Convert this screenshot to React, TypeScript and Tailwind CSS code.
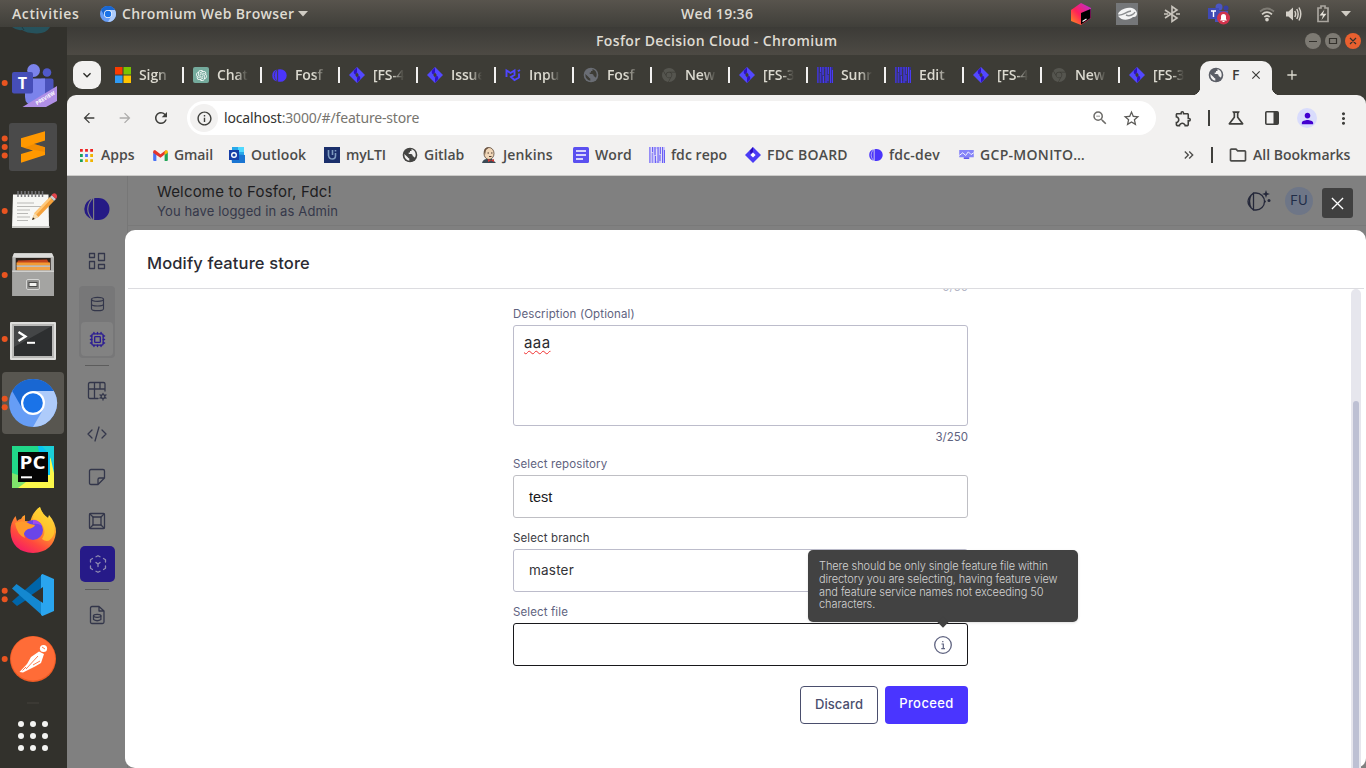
import React from "react";
import {
  MdArrowBack, MdArrowForward, MdRefresh, MdInfoOutline, MdZoomOut, MdStarBorder,
  MdMoreVert, MdPerson, MdOutlineFolder, MdClose,
  MdAdd, MdKeyboardDoubleArrowRight, MdKeyboardArrowDown, MdOutlineScience, MdOutlineExtension,
} from "react-icons/md";
import { RiOpenaiFill } from "react-icons/ri";
import { SiGooglechrome } from "react-icons/si";
import { Database, Cpu } from "lucide-react";

const ui = "font-['Open_Sans','Noto_Sans',sans-serif]";

/* ---------- small brand marks ---------- */

function ChromiumMark({ className }: { className: string }) {
  return (
    <svg viewBox="0 0 48 48" className={className}>
      <circle cx="24" cy="24" r="24" fill="#669df6" />
      <path d="M3.2 12A24 24 0 0 1 44.8 12L24 12L13.6 30Z" fill="#1967d2" />
      <path d="M44.8 12A24 24 0 0 1 24 48L34.4 30L36 24L24 12Z" fill="#aecbfa" />
      <circle cx="24" cy="24" r="12" fill="#fff" />
      <circle cx="24" cy="24" r="9.8" fill="#1a73e8" />
    </svg>
  );
}

function Jira() {
  return (
    <svg viewBox="0 0 16 16" className="size-4">
      <path d="M8 0L16 8L8 16L0 8Z" fill="#5348ff" />
      <path d="M8 .5L5 3.500Q4 6.500 6.500 7.500L8 5.300ZM8 15.500L11 12.500Q12 9.500 9.500 8.500L8 10.700Z" fill="#2f10c8" />
      <path d="M8 5.400L9.800 8L8 10.600L6.200 8Z" fill="#3d3c36" />
    </svg>
  );
}

function JiraLight() {
  return (
    <svg viewBox="0 0 16 16" className="size-4">
      <path d="M8 0L16 8L8 16L0 8Z" fill="#4b3cf5" />
      <path d="M8 0L5 3.500L5.500 7L8 5Z" fill="#2c0cb8" />
      <path d="M8 5.400L10.600 8L8 10.600L5.400 8Z" fill="#fff" />
    </svg>
  );
}

function FosforMark({ className, line }: { className: string; line: string }) {
  return (
    <svg viewBox="0 0 28 22" className={className}>
      <path d="M11 .4A10.800 10.800 0 0 0 11 21.600Z" fill="currentColor" />
      <path d="M11.500 .3A11.800 11 0 0 1 16.500 0A11 11 0 0 1 16.500 22A11.800 11 0 0 1 11.500 21.700Z" fill="currentColor" />
      <path d="M10.500 .4Q1 11 10.500 21.600M11.600 0V22" stroke={line} strokeWidth="1.100" fill="none" />
    </svg>
  );
}

function Stripes({ pale }: { pale?: boolean }) {
  const bg = pale ? "#c9c4fb" : "#332f8e";
  return (
    <svg viewBox="0 0 16 16" className="size-4">
      <rect width="16" height="16" fill={bg} />
      <path d="M1 0V16M3.500 0V5M3 6V16M6 0V8M6.500 9V16M9 0V16M11.500 0V7M11 8V14M13.500 0V16M15.500 3V16" stroke={pale ? "#6a5ff5" : "#4a3bf2"} strokeWidth="1.100" />
      <path d="M2.200 0V16M7.700 2V14M12.400 0V16" stroke={pale ? "#f2f1f0" : "#3d3c36"} strokeWidth=".8" />
    </svg>
  );
}

function Squares() {
  return (
    <svg viewBox="0 0 16 16" className="size-4">
      <path d="M0 0H7.500V7.500H0Z" fill="#fb3b00" /><path d="M8.500 0H16V7.500H8.500Z" fill="#7bc400" />
      <path d="M0 8.500H7.500V16H0Z" fill="#2f9bf5" /><path d="M8.500 8.500H16V16H8.500Z" fill="#ffc400" />
    </svg>
  );
}

function Mui() {
  return (
    <svg viewBox="0 0 16 16" className="size-4" fill="none" stroke="#4f46ff" strokeWidth="1.900">
      <path d="M1.500 10V3.500L5.500 6L9.500 3.500V8L6 10L9.500 13L14 10.500V6.500M12.800 4.300L15 3" />
    </svg>
  );
}

/* ---------- top panel ---------- */

function TopPanel() {
  return (
    <header className={`${ui} flex h-[27px] shrink-0 items-center bg-linear-to-b from-[#58544d] to-[#403f3a] text-[14px] font-semibold text-[#dfdbd2]`}>
      <div className="flex w-[681px] items-center pl-3">
        <span className="w-[68px] whitespace-nowrap pb-px tracking-[0.6px]">Activities</span>
        <ChromiumMark className="ml-5 size-4" />
        <span className="ml-[6px] w-[173px] whitespace-nowrap pb-px tracking-[0.350px]">Chromium Web Browser</span>
        <svg viewBox="0 0 10 6" className="ml-[3px] h-[6px] w-[10px]"><path d="M0 0H10L5 5.500Z" fill="#d0ccc4" /></svg>
      </div>
      <span className="w-[74px] whitespace-nowrap pb-px tracking-[0.3px]">Wed 19:36</span>
      <div className="ml-[315px] flex items-center">
        <svg viewBox="0 0 22 22" className="size-[22px]">
          <defs>
            <linearGradient id="jb" x1="0" x2="1" y1="1" y2="0"><stop offset="0" stopColor="#ff9419" /><stop offset=".45" stopColor="#ff1f5a" /><stop offset="1" stopColor="#b62fe0" /></linearGradient>
          </defs>
          <path d="M11 0L21 5V15L11 22L1 18V7Z" fill="url(#jb)" />
          <path d="M11 10L20.500 6V15L11 21.500Z" fill="#000" /><path d="M12.500 18.500L16.500 16" stroke="#fff" strokeWidth="1.200" />
        </svg>
        <svg viewBox="0 0 22 22" className="ml-[24px] size-[22px]">
          <rect width="22" height="22" fill="#757779" />
          <path d="M3 14C-1 10 8 3 16 5C23 7 22 15 17 14C12 18 5 17 3 14Z" fill="#f4f4f4" />
          <path d="M2 12C7 13 9 9 15 8M10 12C14 14 18 11 19 9" stroke="#8b8d8f" strokeWidth="1.400" fill="none" />
        </svg>
        <svg viewBox="0 0 18 18" className="ml-[25px] size-[18px]" fill="none" stroke="#c9c5bd" strokeWidth="1.600"><path d="M2 5L14 13L9 16.500V1.500L14 5L2 13M1 9H5M13 9H17" /></svg>
        <svg viewBox="0 0 24 22" className="ml-[26px] h-[22px] w-6">
          <circle cx="12" cy="4" r="3.500" fill="#4a56c4" /><circle cx="19" cy="5" r="2.500" fill="#373fa4" />
          <path d="M8 8H21V19H8Z" fill="#4850b8" /><rect x="1" y="5" width="11" height="11" fill="#3f49b5" />
          <path d="M4 8H9M6.500 8V14" stroke="#fff" strokeWidth="1.400" />
          <circle cx="16.500" cy="15" r="6.500" fill="#d0334c" />
          <path d="M13 17.500L14 16V13.500A2.500 2.500 0 0 1 19 13.500V16L20 17.500ZM15.500 18H17.500V19H15.500Z" fill="#fff" />
        </svg>
        <svg viewBox="0 0 16 16" className="ml-[28px] size-4" fill="none" stroke="#d5d1c9" strokeWidth="1.700">
          <path d="M1 5.500Q8 -.5 15 5.500" opacity=".35" /><path d="M3 8.300Q8 4 13 8.300" /><path d="M5.300 11Q8 8.500 10.700 11" /><circle cx="8" cy="13.600" r="1" fill="#d5d1c9" />
        </svg>
        <svg viewBox="0 0 18 16" className="ml-[10px] h-4 w-[18px]" fill="none" stroke="#d5d1c9" strokeWidth="1.500">
          <path d="M1 5.500H3.500L8 1.500V14.500L3.500 10.500H1Z" fill="#d5d1c9" stroke="none" /><path d="M9.800 5Q11.500 8 9.800 11M11.800 3Q14.500 8 11.800 13M14 1.500Q17.500 8 14 14.500" />
        </svg>
        <svg viewBox="0 0 14 18" className="ml-[13px] h-[18px] w-[14px]">
          <path d="M2 3H5V1H9V3H12V16.500H2Z" fill="none" stroke="#a9a59e" strokeWidth="1.700" /><path d="M8.500 4.500L3.500 10.500H7L5.500 15L10.500 8.800H7Z" fill="#e5e1d9" />
        </svg>
        <svg viewBox="0 0 10 6" className="ml-[11px] h-[6px] w-[10px]"><path d="M0 0H10L5 5.500Z" fill="#d0ccc4" /></svg>
      </div>
    </header>
  );
}

/* ---------- dock ---------- */

function DockItem({ dots = 0, children }: { dots?: number; children: React.ReactNode }) {
  const start = 32 - (dots - 1) * 4.2;
  return (
    <svg viewBox="0 0 67 64" className="block h-16 w-[67px] shrink-0">
      {children}
      {Array.from({ length: dots }, (_, i) => (
        <circle key={i} cx="4.700" cy={start + i * 8.4} r="3" fill="#e95420" />
      ))}
    </svg>
  );
}

function Dock() {
  return (
    <aside className="flex w-[67px] shrink-0 flex-col bg-[#32312c]">
      <svg viewBox="0 0 67 24" className="block h-6 w-[67px] shrink-0">
        <path d="M12 0H50Q46 7 36 6.500Q26 6 22 3Q17 4 12 0Z" fill="#26525c" /><path d="M22 0L24 3" stroke="#1d3b40" />
      </svg>
      <DockItem dots={1}>
        <circle cx="47" cy="21.500" r="4.300" fill="#5059c9" /><rect x="40" y="27.500" width="13.500" height="20" rx="2" fill="#4b53bc" />
        <circle cx="33.600" cy="19.500" r="6.400" fill="#7b83eb" /><path d="M25 27.500H45V46Q43 55 34 55Q25 54 25 46Z" fill="#7b83eb" />
        <rect x="12" y="21" width="21" height="21.500" rx="2" fill="#464eb8" />
        <text x="22.500" y="37.500" textAnchor="middle" fontSize="16" fontWeight="700" fill="#fff" fontFamily="Open Sans">T</text>
        <path d="M22.500 56L57 35V56Z" fill="#b08fe6" />
        <text transform="translate(37 54.200) rotate(-31)" fontSize="5.200" fontWeight="700" fill="#fff" fontFamily="Open Sans" textLength="21.500" lengthAdjust="spacingAndGlyphs">PREVIEW</text>
        <path d="M57 50V56H46Z" fill="#32312c" />
      </DockItem>
      <DockItem dots={3}>
        <rect x="9" y="8" width="48" height="48" rx="3" fill="#4a4a4a" />
        <path d="M21 23.300L45 16.300V25.500L34 29L45 32.300V40L21 47.700V39L33 35.500L21 31.700Z" fill="#ff9800" />
        <path d="M34 29L45 32.300V37L24 33Z" fill="#e98300" opacity=".6" />
      </DockItem>
      <DockItem dots={1}>
        <path d="M13 15.500H48.500L49 48.500H12Z" fill="#f7f7f4" /><path d="M12 47H49.500V49H12Z" fill="#c9c9c5" />
        <path d="M18 12V18M21.500 12V18M25 12V18M28.500 12V18M32 12V18M35.500 12V18M39 12V18M42.500 12V18" stroke="#77777a" strokeWidth="1.500" />
        <path d="M17 24H34M17 27.500H42M17 31H30M17 34.500H28M17 38H30M17 41.500H28" stroke="#b9b9b6" strokeWidth="1" />
        <path d="M32 41L34.500 34L50 18L54 22L38.500 38Z" fill="#f5a13b" /><path d="M34.500 34L50 18L51.500 19.500L36 36Z" fill="#ffc97a" />
        <path d="M32 41L34.500 34L38.500 38Z" fill="#f6ddb0" /><path d="M32 41L33 38.300L34.800 40Z" fill="#222" />
        <path d="M50 18L52 16L56 20L54 22Z" fill="#c9cdd0" /><path d="M51.500 16Q54 13 56.500 15.500Q58 18 55.800 20Z" fill="#e2454c" />
      </DockItem>
      <DockItem dots={1}>
        <path d="M14 10.300H52L54 14V53H12.300V14Z" fill="#b3b3b1" /><path d="M14 10.300H52L53.500 14.300H12.600Z" fill="#dcdcda" />
        <rect x="15.700" y="15" width="35" height="12.500" fill="#2b221c" />
        <path d="M18 17.500L47 16.500L49 20H17Z" fill="#c2441c" /><rect x="16.500" y="19.500" width="33.500" height="3" fill="#f39b35" />
        <rect x="16.500" y="22.500" width="33.500" height="1.200" fill="#fff" /><rect x="16.500" y="24" width="33.500" height="3.500" fill="#f0a248" />
        <path d="M12.300 27.500H54V53H12.300Z" fill="#a4a4a2" /><path d="M12.300 27.500H54V29H12.300Z" fill="#d0d0ce" />
        <rect x="26.500" y="36.500" width="13" height="10" rx="1.500" fill="#8f8f8d" stroke="#d6d6d4" /><rect x="29" y="39.500" width="8" height="4" fill="#f2f2f0" stroke="#4a4a48" />
      </DockItem>
      <DockItem dots={1}>
        <rect x="10" y="15" width="46" height="38" rx="1" fill="#dededc" /><rect x="12" y="17" width="42" height="34" fill="#b9b9b7" />
        <rect x="14" y="19" width="38" height="30" fill="#2d2f30" /><path d="M14 19H52L14 40Z" fill="#444647" />
        <path d="M18.500 25L25.500 29.500L18.500 34" stroke="#fff" strokeWidth="2.300" fill="none" /><path d="M27 35.800H35" stroke="#fff" strokeWidth="2" />
      </DockItem>
      <DockItem>
        <rect x="2" y="1" width="62" height="62" rx="4" fill="#585650" />
        <circle cx="33" cy="32" r="24" fill="#669df6" />
        <path d="M12.200 20A24 24 0 0 1 53.800 20L33 20L22.600 38Z" fill="#1967d2" />
        <path d="M53.800 20A24 24 0 0 1 33 56L43.400 38L45 32L33 20Z" fill="#aecbfa" />
        <circle cx="33" cy="32" r="12" fill="#fff" /><circle cx="33" cy="32" r="9.800" fill="#1a73e8" />
        <circle cx="4.700" cy="27.800" r="3" fill="#e95420" /><circle cx="4.700" cy="36.200" r="3" fill="#e95420" />
      </DockItem>
      <DockItem>
        <rect x="12" y="11" width="42" height="42" fill="#21d789" /><path d="M38 11H54V53H44Z" fill="#07c3f2" />
        <path d="M12 53L20 40H50V20L54 38V53Z" fill="#fcf84a" /><path d="M12 38V53H18L30 44Z" fill="#7fe36b" /><path d="M42 11H54V30L48 18Z" fill="#1ccfd8" />
        <rect x="18" y="17" width="30" height="30" fill="#050505" />
        <text x="19.500" y="33.500" fontSize="18" fontWeight="700" fill="#fff" fontFamily="Open Sans" textLength="26" lengthAdjust="spacingAndGlyphs">PC</text>
        <path d="M21 42.300H32" stroke="#fff" strokeWidth="2" />
      </DockItem>
      <DockItem>
        <defs>
          <linearGradient id="ff" x1=".8" x2=".2" y1="0" y2="1"><stop offset="0" stopColor="#fff44f" /><stop offset=".35" stopColor="#ffa52a" /><stop offset=".7" stopColor="#ff4a3d" /><stop offset="1" stopColor="#f5156c" /></linearGradient>
        </defs>
        <path d="M15.500 17L17 22Q19 20 21 20Q22 17 25 16V22Q28 22 30 23Q33 12 40 8Q42 15 48 19L49 16Q56 24 56 33Q54 53 33 54Q12 53 10.500 33Q10 24 15.500 17Z" fill="url(#ff)" />
        <circle cx="33" cy="31" r="10" fill="#6a45e8" /><path d="M33 21A10 10 0 0 1 42 27Q38 24 33 25Z" fill="#a04cf0" />
        <path d="M15 24Q23 20 30 25L35 26Q34 29 28 30Q22 33 25 39Q17 36 15 24Z" fill="#ff9a2b" /><path d="M40 8Q42 15 48 19Q55 24 54 35Q49 46 42 40Q47 33 42 25Q37 20 33 20Q34 12 40 8Z" fill="#ffcf2e" opacity=".75" />
      </DockItem>
      <DockItem dots={2}>
        <path d="M12 38.500L43 11V26L17 43Z" fill="#0065a9" /><path d="M12 25.500L16.500 21L43 40V53Z" fill="#1488d0" />
        <path d="M42.500 11L54 16V48L42.500 53L41 52V12Z" fill="#2aa5ef" /><path d="M43 24V40L31.500 32Z" fill="#32312c" />
      </DockItem>
      <DockItem dots={1}>
        <circle cx="33" cy="32" r="23" fill="#ef5b25" /><circle cx="33" cy="31.500" r="22" fill="#ff6c37" />
        <circle cx="43.500" cy="21.500" r="3.600" fill="#fff" /><path d="M39 24.500L44 27L41 36L35 39.500L23 45.500L19.500 45L27 37L31 30Z" fill="#fff" />
        <path d="M26 42L38 29M22.500 43.500L26 40M33 38L40 34M42 20L45 22" stroke="#ff6c37" strokeWidth=".9" />
      </DockItem>
      <svg viewBox="0 0 67 77" className="block h-[77px] w-[67px] shrink-0" fill="#f3f3f1">
        <path d="M27 12H39" stroke="#45433d" />
        {[33, 45, 57].map((y) => [21, 33, 45].map((x) => <circle key={`${x}-${y}`} cx={x} cy={y} r="3" />))}
      </svg>
    </aside>
  );
}

/* ---------- browser chrome ---------- */

function Globe({ className }: { className: string }) {
  return (
    <svg viewBox="0 0 16 16" className={className}>
      <circle cx="8" cy="8" r="7.300" fill="currentColor" />
      <path d="M9.500 2Q13.700 3.500 13.700 8Q13.500 9.500 12.800 10.700Q12 9.500 10.800 9.300Q10.800 7.300 9.300 7H6.700V5.500H8V4H9.500Z" className="fill-[var(--gap)]" />
      <path d="M2.300 7L5.800 10.200Q6 11.300 7.300 11.500V13.700Q2.300 12.700 2.300 7Z" className="fill-[var(--gap)]" />
    </svg>
  );
}

const globe = <Globe className="size-4 text-[#6a6d74] [--gap:#3d3c36]" />;
const chromeGrey = <SiGooglechrome className="m-px size-[14px] text-[#55554f]" />;
const fosfor = <FosforMark className="h-[13px] w-4 text-[#4b35fb]" line="#3d3c36" />;

const tabs: { icon: React.ReactNode; label: string }[] = [
  { icon: <Squares />, label: "Sign" },
  { icon: <span className="flex size-4 items-center justify-center rounded-xs bg-[#74aa9c] text-white"><RiOpenaiFill className="size-[13px]" /></span>, label: "Chat" },
  { icon: fosfor, label: "Fosf" },
  { icon: <Jira />, label: "[FS-4" },
  { icon: <Jira />, label: "Issue" },
  { icon: <Mui />, label: "Inpu" },
  { icon: globe, label: "Fosf" },
  { icon: chromeGrey, label: "New" },
  { icon: <Jira />, label: "[FS-3" },
  { icon: <Stripes />, label: "Sunr" },
  { icon: <Stripes />, label: "Edit" },
  { icon: <Jira />, label: "[FS-4" },
  { icon: chromeGrey, label: "New" },
  { icon: <Jira />, label: "[FS-3" },
];

function TabStrip() {
  return (
    <div className={`${ui} flex h-10 shrink-0 items-center bg-[#3d3c36] pl-[6px] text-[14px] font-semibold text-[#dcdad0]`}>
      <div className="mr-[11px] flex size-7 items-center justify-center rounded-[9px] bg-[#f2f1f0] text-[#2b2b28]">
        <MdKeyboardArrowDown className="size-4" />
      </div>
      {tabs.map((t, i) => (
        <div key={i} className="flex w-[78px] shrink-0 items-center pl-[3px]">
          <span className="flex size-4 shrink-0 items-center justify-center">{t.icon}</span>
          <span className="ml-2 w-[31px] whitespace-nowrap pb-[2px] tracking-[-0.1px] mask-r-from-60% mask-r-to-100%">{t.label}</span>
          {i < 13 && <span className="ml-[12px] h-4 w-[2px] bg-[#f2f1f0]" />}
        </div>
      ))}
      <div className="relative -ml-[4px] flex h-[34px] w-[72px] shrink-0 items-center self-end rounded-t-[10px] bg-[#f2f1f0] pb-[7px] pl-2 text-[#3b3b38]">
        <span className="absolute -left-2 bottom-0 size-2 bg-[radial-gradient(circle_at_0_0,#3d3c36_8px,#f2f1f0_8.500px)]" />
        <span className="absolute -right-2 bottom-0 size-2 bg-[radial-gradient(circle_at_100%_0,#3d3c36_8px,#f2f1f0_8.500px)]" />
        <Globe className="size-4 text-[#5b5e66] [--gap:#f2f1f0]" />
        <span className="ml-[8px] w-[13px] pb-px">F</span>
        <MdClose className="ml-[4px] size-[14px]" />
      </div>
      <MdAdd className="ml-[12px] size-[16px]" />
    </div>
  );
}

function Toolbar() {
  return (
    <div className="flex h-[46px] shrink-0 items-center bg-[#f2f1f0] pl-[14px] text-[#3f3f3c]">
      <MdArrowBack className="size-4" />
      <MdArrowForward className="ml-5 size-4 text-[#adacab]" />
      <MdRefresh className="ml-[19px] size-[18px]" />
      <div className="ml-[17px] flex h-[34px] w-[969px] items-center rounded-full bg-white pl-[3px]">
        <span className="flex size-7 items-center justify-center rounded-full bg-[#f2f1f0]"><MdInfoOutline className="size-[17px]" /></span>
        <span className="ml-[6px] w-[860px] whitespace-nowrap pb-px font-['Noto_Sans',sans-serif] text-[14px] tracking-[-0.170px] text-[#77756f]"><span className="text-[#33332f]">localhost</span>:3000/#/feature-store</span>
        <MdZoomOut className="ml-[7px] size-[18px] text-[#6d6c69]" />
        <MdStarBorder className="ml-[13px] size-[19px] text-[#5d5c59]" />
      </div>
      <MdOutlineExtension className="ml-[18px] size-[19px]" />
      <span className="ml-[15px] h-4 w-[2px] bg-[#3f3f3c]" />
      <MdOutlineScience className="ml-[16px] size-[20px]" />
      <svg viewBox="0 0 14 14" className="ml-[19px] size-[14px]"><rect x=".8" y=".8" width="12.400" height="12.400" rx="1" fill="none" stroke="#3f3f3c" strokeWidth="1.600" /><path d="M8.500 1H13V13H8.500Z" fill="#3f3f3c" /></svg>
      <span className="ml-[18px] flex size-5 items-center justify-center rounded-full bg-[#d9dcfc]"><MdPerson className="size-[17px] text-[#4300d0]" /></span>
      <MdMoreVert className="ml-[17px] size-[19px]" />
    </div>
  );
}

const bookmarks: { icon: React.ReactNode; label: string; w: string }[] = [
  {
    label: "Apps", w: "w-[51px] tracking-[0px]",
    icon: <svg viewBox="0 0 14 14" className="-ml-[2px] size-[13px]"><path d="M0 0H3V3H0ZM5.500 0H8.500V3H5.500ZM11 0H14V3H11Z" fill="#e22" /><path d="M0 5.500H3V8.500H0ZM0 11H3V14H0Z" fill="#18a05b" /><path d="M5.500 5.500H8.500V8.500H5.500Z" fill="#4a6cf7" /><path d="M11 5.500H14V8.500H11ZM11 11H14V14H11ZM5.500 11H8.500V14H5.500Z" fill="#f0b400" /></svg>,
  },
  {
    label: "Gmail", w: "w-[55px] tracking-[-0.1px]",
    icon: <svg viewBox="0 0 16 12" className="h-[11px] w-[15px]"><path d="M0 2V11Q0 12 1 12H3.500V4Z" fill="#4a72f5" /><path d="M16 2V11Q16 12 15 12H12.500V4Z" fill="#22a556" /><path d="M0 2Q0 0 2 0L8 4.500L14 0L12.500 5L8 8.500L3.500 5.500L0 3Z" fill="#e5352b" /><path d="M12.500 1.500L14 0Q16 0 16 2V3L12.500 5.500Z" fill="#f9bb05" /></svg>,
  },
  {
    label: "Outlook", w: "w-[73px] tracking-[0.1px]",
    icon: <svg viewBox="0 0 16 16" className="size-4"><path d="M3 0H15V9H3Z" fill="#28a8ea" /><path d="M9 0H15V5H9Z" fill="#50d9ff" /><path d="M2 7L16 8V16H3Z" fill="#1a75d2" /><path d="M0 3H10V13H0Z" fill="#173fa8" /><circle cx="5" cy="8" r="2.300" fill="none" stroke="#fff" strokeWidth="1.400" /></svg>,
  },
  {
    label: "myLTI", w: "w-[56px] tracking-[-0.150px]",
    icon: <svg viewBox="0 0 16 16" className="size-4"><rect width="16" height="16" fill="#1b2f6b" /><path d="M4.500 3V8.500Q5 12 8.500 12Q11.500 12 11.500 8.500V6M8.500 3V8M11.500 3V4.500" fill="none" stroke="#7e9cc0" strokeWidth="1.600" /></svg>,
  },
  { label: "Gitlab", w: "w-[57px] tracking-[0px]", icon: <Globe className="size-4 shrink-0 text-[#454543] [--gap:#f2f1f0]" /> },
  {
    label: "Jenkins", w: "w-[70px] tracking-[0.150px]",
    icon: <svg viewBox="0 0 16 16" className="size-4"><path d="M1 16Q2 12 6 12H11L15 16Z" fill="#3b4a55" /><ellipse cx="8" cy="6.500" rx="5" ry="6" fill="#f0d6b7" stroke="#5a4636" strokeWidth=".8" /><path d="M3 5Q3 0 8 .4L5 3L4 8Z" fill="#6b5341" /><path d="M6.500 6H8M10 6H11.500M8 9.500H10.500" stroke="#3d2d25" strokeWidth=".9" /><path d="M7 12L13 15V12L7 15Z" fill="#d33833" /></svg>,
  },
  {
    label: "Word", w: "w-[54px] tracking-[0.1px]",
    icon: <svg viewBox="0 0 16 16" className="size-4"><rect width="16" height="16" rx="1.500" fill="#5b50f0" /><path d="M3 4H13M3 8H13M3 12H10" stroke="#fff" strokeWidth="1.600" /></svg>,
  },
  { label: "fdc repo", w: "w-[74px] tracking-[0.050px]", icon: <Stripes pale /> },
  { label: "FDC BOARD", w: "w-[100px] tracking-[0.2px]", icon: <JiraLight /> },
  { label: "fdc-dev", w: "w-[69px] tracking-[0.2px]", icon: <FosforMark className="h-3 w-[15px] text-[#4b35fb]" line="#f2f1f0" /> },
  {
    label: "GCP-MONITO…", w: "w-[125px] tracking-[0.3px]",
    icon: <svg viewBox="0 0 16 11" className="h-[10px] w-[15px]"><rect width="16" height="8" fill="#8583f8" /><path d="M0 6L4 3L7 6L10 2L13 5L16 3" fill="none" stroke="#fff" /><path d="M5 8H11V10H5Z" fill="#6058ee" /></svg>,
  },
];

function Bookmarks() {
  return (
    <div className={`${ui} flex h-[35px] shrink-0 items-center border-b border-[#cccbc9] bg-[#f2f1f0] pb-[6px] pl-[12px] text-[14px] font-semibold text-[#4c4c4a]`}>
      {bookmarks.map((b) => (
        <div key={b.label} className="flex shrink-0 items-center">
          <span className="mr-[6px] flex size-4 shrink-0 items-center justify-center">{b.icon}</span>
          <span className={`${b.w} whitespace-nowrap pb-[2px]`}>{b.label}</span>
        </div>
      ))}
      <MdKeyboardDoubleArrowRight className="ml-[76px] size-4 shrink-0" />
      <span className="ml-[14px] h-4 w-[2px] shrink-0 bg-[#3f3f3c]" />
      <MdOutlineFolder className="ml-[15px] size-[20px] shrink-0" />
      <span className="ml-[5px] whitespace-nowrap pb-[2px] tracking-[0px]">All Bookmarks</span>
    </div>
  );
}

/* ---------- application ---------- */

function SideIcon({ children }: { children: React.ReactNode }) {
  return (
    <svg viewBox="0 0 20 20" className="size-5" fill="none" stroke="currentColor" strokeWidth="1.300" strokeLinejoin="round" strokeLinecap="round">{children}</svg>
  );
}

function Sidebar() {
  return (
    <nav className="flex w-[61px] shrink-0 flex-col items-center border-r border-[#777777] text-[#33364a]">
      <div className="flex h-[66px] items-center pr-[2px]"><FosforMark className="h-[22px] w-7 text-[#251a85]" line="#808080" /></div>
      <div className="flex h-[38px] items-center"><SideIcon><path d="M2.500 2.500H7.500V6.500H2.500ZM11.500 2.500H17.500V9.500H11.500ZM2.500 10.500H7.500V17.500H2.500ZM11.500 13.500H17.500V17.500H11.500Z" /></SideIcon></div>
      <div className="mt-[6px] flex h-[72px] w-9 flex-col items-center rounded-sm bg-[#777778]">
        <div className="flex h-[36px] items-center"><Database className="h-[16px] w-[17px]" strokeWidth={1.7} /></div>
        <div className="flex h-[34px] w-8 items-center justify-center rounded-sm bg-[#828282] text-[#2b1c93]"><Cpu className="size-[17px]" strokeWidth={1.9} /></div>
      </div>
      <div className="mt-[7px] h-px w-6 bg-[#5c5c5c]" />
      <div className="flex h-[50px] items-center">
        <SideIcon><path d="M11 17.500H3Q1.500 17.500 1.500 16V3Q1.500 1.500 3 1.500H16.500Q18 1.500 18 3V10M1.500 8H18M7.500 1.500V17.500M13 1.500V8" /><circle cx="16" cy="15.500" r="1.900" /><path d="M16 12.300V13.300M16 17.800V19M13 13.900L14.200 14.500M17.900 16.500L19 17.100M13 17.100L14.200 16.500M17.900 14.500L19 13.900" /></SideIcon>
      </div>
      <div className="flex h-9 items-center"><SideIcon><path d="M5 6L1 10L5 14M15 6L19 10L15 14M12 3L8 17" /></SideIcon></div>
      <div className="flex h-[50px] items-center"><SideIcon><path d="M4 2.500H16Q17.500 2.500 17.500 4V11L11 17.500H4Q2.500 17.500 2.500 16V4Q2.500 2.500 4 2.500ZM17 11H12.500Q11 11 11 12.500V17" /></SideIcon></div>
      <div className="flex h-[38px] items-center"><SideIcon><rect x="2.500" y="2.500" width="15" height="15" rx="1" /><rect x="6" y="6" width="8" height="8" /><path d="M3 3L6 6M17 3L14 6M3 17L6 14M17 17L14 14" /></SideIcon></div>
      <div className="ml-px mt-[6px] flex h-9 w-[35px] items-center justify-center rounded-[5px] bg-[#261a88] text-[#8f8bb0]">
        <SideIcon><path d="M8 2.800L10 1.700L12 2.800M15.500 4.500L17.500 5.700V8M17.500 12V14.300L15.500 15.500M12 17.200L10 18.300L8 17.200M4.500 15.500L2.500 14.300V12M2.500 8V5.700L4.500 4.500M8 8.500L10 10L12 8.500M10 10V12.500" /></SideIcon>
      </div>
      <div className="mt-[7px] h-px w-6 bg-[#5c5c5c]" />
      <div className="flex h-[50px] items-center">
        <SideIcon><path d="M5 1.500H12L17 6V17Q17 18.500 15.500 18.500H5Q3.500 18.500 3.500 17V3Q3.500 1.500 5 1.500ZM12 1.500V6H17" /><ellipse cx="10.200" cy="10.800" rx="3.700" ry="1.500" /><path d="M6.500 10.800V14.500Q10.200 17 13.900 14.500V10.800" /></SideIcon>
      </div>
    </nav>
  );
}

function Label({ dark, children }: { dark?: boolean; children: React.ReactNode }) {
  return <div className={`mb-[3px] h-4 text-[11.500px] leading-4 tracking-[0.120px] ${dark ? "text-[#3c3c43]" : "text-[#5f6380]"}`}>{children}</div>;
}

function Modal() {
  return (
    <section className="absolute bottom-0 left-[58px] right-0 top-[54px] flex flex-col rounded-[10px] bg-white">
      <div className="mr-[2px] ml-[3px] flex h-[59px] shrink-0 items-center border-b border-[#dcdce0] pl-[19px] pt-[9px] text-[16.500px] font-medium text-[#2b2b33]">
        <h1 className="tracking-[0.130px]">Modify feature store</h1>
      </div>
      <div className="flex min-h-0 flex-1 overflow-hidden">
        <form className="ml-[388px] w-[455px] shrink-0">
          <div className="-mt-[10px] h-4 text-right text-[11.500px] leading-4 text-[#b4b6c6]">0/50</div>
          <div className="mt-[11px]"><Label>Description (Optional)</Label></div>
          <div className="h-[101px] rounded-[3px] border border-[#bcbccb] px-[10px] pt-[7px] text-[15px] leading-5 tracking-[0.4px] text-[#2a2a2e]">
            <span className="underline decoration-[#f03030] decoration-wavy decoration-1 underline-offset-[2px]">aaa</span>
          </div>
          <div className="mt-[3px] h-4 text-right text-[11.500px] leading-4 text-[#5f6380]">3/250</div>
          <div className="mt-[11px]"><Label>Select repository</Label></div>
          <div className="flex h-[43px] items-center rounded-[3px] border border-[#bfbfc4] px-[15px] pt-[2px] font-['Liberation_Sans',sans-serif] text-[14.500px] text-[#18181b]">test</div>
          <div className="mt-3"><Label dark>Select branch</Label></div>
          <div className="flex h-[43px] items-center rounded-[3px] border border-[#bcbccb] px-[15px] text-[13.500px] tracking-[0.2px] text-[#333338]">master</div>
          <div className="mt-3"><Label>Select file</Label></div>
          <div className="relative flex h-[43px] items-center justify-end rounded-[3px] border border-[#18181b] pr-[14px]">
            <svg viewBox="0 0 20 20" className="size-5" fill="none" stroke="#5f6380" strokeWidth="1.300"><circle cx="10" cy="10" r="8.300" /><path d="M8.500 9H10.300V13.500M8.300 13.700H12M9.800 6V7.300" strokeWidth="1.200" /></svg>
            <div className="absolute -top-[74px] left-[294px] h-[72px] w-[270px] rounded-[5px] bg-[#424242] px-[11px] pt-[10px] text-[11px] leading-[12.800px] text-[#d3d3d3] shadow-sm">
              <p className="whitespace-nowrap font-light tracking-[-0.080px]">
                There should be only single feature file within<br />directory you are selecting, having feature view<br />and feature service names not exceeding 50<br />characters.
              </p>
              <span className="absolute -bottom-[4px] left-[131px] size-2 rotate-45 bg-[#424242]" />
            </div>
          </div>
          <div className="mt-5 flex justify-end gap-[7px] text-[13px] font-medium tracking-[0.1px]">
            <button type="button" className="h-[38px] w-[78px] rounded-[4px] border border-[#4a4e6d] text-[#4a4e6d]">Discard</button>
            <button type="button" className="h-[38px] w-[83px] rounded-[4px] bg-[#4a35ff] pb-[3px] tracking-[0.4px] text-white">Proceed</button>
          </div>
        </form>
        <div className="ml-auto mr-[5px] flex w-[10px] flex-col items-center rounded-t-full bg-[#e6e6ed] pt-[112px]">
          <div className="w-[6px] flex-1 rounded-t-full bg-[#bdc0d3]" />
        </div>
      </div>
    </section>
  );
}

function AppPage() {
  return (
    <main className="relative flex flex-1 overflow-hidden bg-[#808080] font-['Inter',sans-serif]">
      <Sidebar />
      <header className="flex h-[50px] flex-1 border-b border-[#797979] pl-[29px]">
        <div className="pt-[5px]">
          <div className="text-[15px] leading-[21px] tracking-[0.180px] text-[#1d1d21]">Welcome to Fosfor, Fdc!</div>
          <div className="text-[13px] leading-[19px] tracking-[0.130px] text-[#35384a]">You have logged in as Admin</div>
        </div>
        <div className="ml-auto flex items-center pr-[13px] pt-px">
          <svg viewBox="0 0 26 22" className="h-[22px] w-[26px]" fill="none" stroke="#25283a" strokeWidth="1.300">
            <path d="M7.500 3V20H10A8.500 8.500 0 0 0 10 3ZM7 3.500Q-3 11.500 7 19.500M5.500 4.500Q1.500 11.500 5.500 18.500" /><path d="M20 0L21 3L24 4L21 5L20 8L19 5L16 4L19 3Z" fill="#25283a" stroke="none" /><circle cx="23" cy="10.500" r="1.500" fill="#25283a" stroke="none" /><circle cx="19" cy="11.500" r=".9" fill="#25283a" stroke="none" />
          </svg>
          <span className="ml-[13px] flex size-7 items-center justify-center rounded-full bg-[#6e7687] text-[13px] text-[#202c47]">FU</span>
          <button type="button" className="ml-[9px] mt-1 flex h-[30px] w-[31px] items-center justify-center rounded-[3px] bg-[#404040] text-white">
            <svg viewBox="0 0 14 14" className="size-[13px]" stroke="currentColor" strokeWidth="1.400"><path d="M1 1L13 13M13 1L1 13" /></svg>
          </button>
        </div>
      </header>
      <Modal />
    </main>
  );
}

export default function App() {
  return (
    <div className="flex h-[768px] w-[1366px] flex-col overflow-hidden bg-[#32312c]">
      <TopPanel />
      <div className="flex min-h-0 flex-1">
        <Dock />
        <div className="flex w-[1299px] flex-col">
          <div className={`${ui} flex h-7 shrink-0 items-center bg-linear-to-b from-[#3c3b37] to-[#4d4a44] text-[14px] font-semibold text-[#dfdbd2]`}>
            <span className="ml-[529px] w-[241px] whitespace-nowrap pb-px tracking-[0.370px]">Fosfor Decision Cloud - Chromium</span>
            <svg viewBox="0 0 60 20" className="ml-[467px] h-5 w-[60px] shrink-0">
              <circle cx="9" cy="10" r="8" fill="#7d7a73" /><circle cx="29" cy="10" r="8" fill="#7d7a73" /><circle cx="49" cy="10" r="8" fill="#e9602f" />
              <path d="M5 10.500H13M25.500 7.500H32.500V12.500H25.500ZM46 7L52 13M52 7L46 13" fill="none" stroke="#33312c" strokeWidth="1.200" />
            </svg>
          </div>
          <TabStrip />
          <div className="flex min-h-0 flex-1 flex-col bg-[#3d3c36]">
            <div className="overflow-hidden rounded-t-[9px]"><Toolbar /><Bookmarks /></div>
            <AppPage />
          </div>
        </div>
      </div>
    </div>
  );
}
